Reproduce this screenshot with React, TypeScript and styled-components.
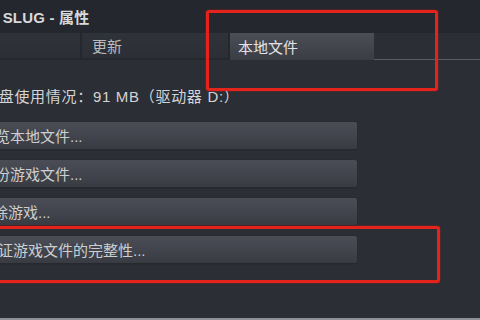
import React from "react";
import styled, { createGlobalStyle } from "styled-components";

const GlobalStyle = createGlobalStyle`
  html, body { margin: 0; padding: 0; background: #2a2d33; }
  body { font-family: "Liberation Sans", "Noto Sans CJK SC", sans-serif; }
`;

const Window = styled.div`
  position: relative;
  width: 480px;
  height: 320px;
  overflow: hidden;
  display: flex;
  flex-direction: column;
  background: #2b2e34;
  color: #cfd0d2;
  font-size: 15px;
`;

const TitleBar = styled.div`
  height: 33px;
  display: flex;
  align-items: center;
  background: #24272d;
  flex: none;
`;

const Title = styled.div`
  margin-left: -53px;
  white-space: nowrap;
  color: #d8d9db;
  font-weight: bold;
  letter-spacing: 0.2px;
`;

const TabBar = styled.div`
  height: 27px;
  display: flex;
  align-items: stretch;
  flex: none;
  background: #2b2e34;
`;

const Tab = styled.div<{ $w: number; $active?: boolean; $pad: number; $offset?: number }>`
  width: ${(p) => p.$w}px;
  margin-left: ${(p) => -(p.$offset || 0)}px;
  flex: none;
  box-sizing: border-box;
  display: flex;
  align-items: center;
  padding-left: ${(p) => p.$pad}px;
  white-space: nowrap;
  color: ${(p) => (p.$active ? "#e2e3e5" : "#b9bbbe")};
  background: ${(p) =>
    p.$active
      ? "linear-gradient(#4b4e56, #3a3d44)"
      : "linear-gradient(#2f3238, #2c2f35)"};
  border-right: ${(p) => (p.$active ? "none" : "2px solid #24272c")};
  border-bottom: ${(p) => (p.$active ? "none" : "2px solid #25282d")};
`;

const TabFill = styled.div`
  flex: 1;
  border-bottom: 1px solid #5a5d63;
  height: 26px;
`;

const Content = styled.div`
  display: flex;
  flex-direction: column;
  flex: 1;
`;

const Info = styled.div`
  margin-top: 27px;
  height: 20px;
  line-height: 20px;
  margin-left: -17px;
  letter-spacing: 0.7px;
  white-space: nowrap;
  color: #d3d4d6;
`;

const ButtonList = styled.div`
  margin-top: 15px;
  display: flex;
  flex-direction: column;
  gap: 10px;
`;

const ActionButton = styled.div<{ $shift: number }>`
  width: 357px;
  height: 28px;
  box-sizing: border-box;
  display: flex;
  align-items: center;
  white-space: nowrap;
  color: #cdcecf;
  background: linear-gradient(#4a4d56, #42454d 50%, #383b42);
  border-bottom: 1px solid #26292e;
  border-radius: 0 2px 2px 0;
  box-shadow: 0 0 1px rgba(0, 0, 0, 0.5);
  & > span {
    margin-left: ${(p) => -p.$shift}px;
  }
`;

const Footer = styled.div`
  margin-top: auto;
  height: 2px;
  background: #8e9297;
  flex: none;
`;

const Highlight = styled.div<{ $x: number; $y: number; $w: number; $h: number }>`
  position: absolute;
  left: ${(p) => p.$x}px;
  top: ${(p) => p.$y}px;
  width: ${(p) => p.$w}px;
  height: ${(p) => p.$h}px;
  box-sizing: border-box;
  border: 3px solid #e3231c;
  border-radius: 3px;
  box-shadow: 0 0 2px rgba(227, 35, 28, 0.6);
  pointer-events: none;
`;

const buttons = [
  { label: "浏览本地文件...", shift: 20 },
  { label: "备份游戏文件...", shift: 20 },
  { label: "删除游戏...", shift: 22 },
  { label: "验证游戏文件的完整性...", shift: 17 },
];

export default function App() {
  return (
    <>
      <GlobalStyle />
      <Window>
        <TitleBar>
          <Title>METAL SLUG - 属性</Title>
        </TitleBar>
        <TabBar>
          <Tab $w={148} $pad={10} $offset={66}>通用</Tab>
          <Tab $w={148} $pad={10}>更新</Tab>
          <Tab $w={144} $pad={8} $active>本地文件</Tab>
          <TabFill />
        </TabBar>
        <Content>
          <Info>磁盘使用情况：91 MB（驱动器 D:）</Info>
          <ButtonList>
            {buttons.map((b) => (
              <ActionButton key={b.label} $shift={b.shift}>
                <span>{b.label}</span>
              </ActionButton>
            ))}
          </ButtonList>
        </Content>
        <Footer />
        <Highlight $x={206} $y={10} $w={232} $h={81} />
        <Highlight $x={-10} $y={226} $w={450} $h={57} />
      </Window>
    </>
  );
}
